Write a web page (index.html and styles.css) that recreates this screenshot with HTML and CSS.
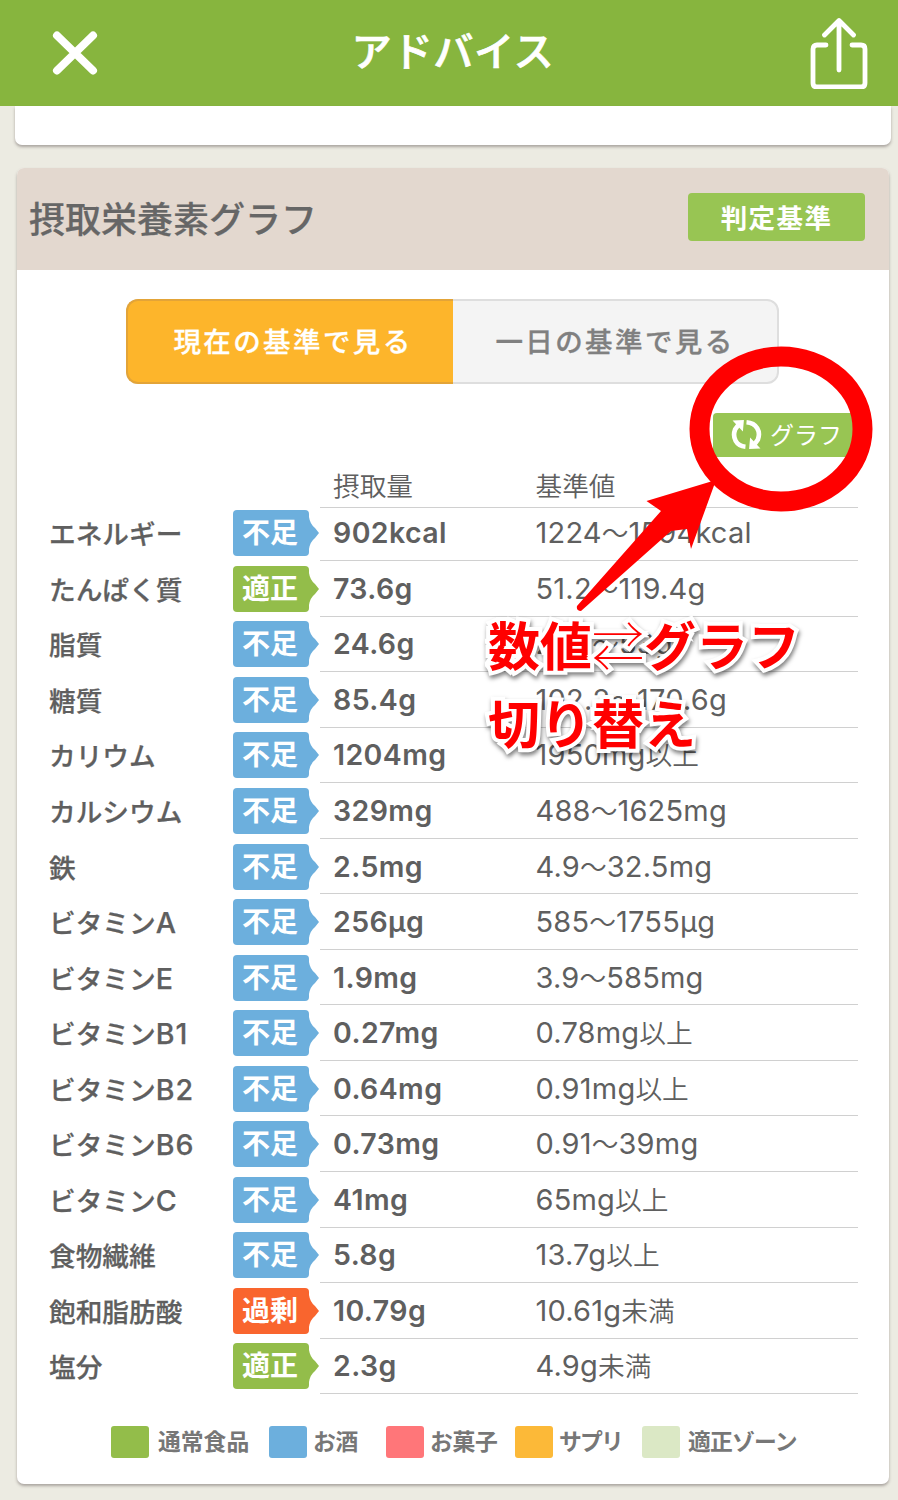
FILE: index.html
```html
<!DOCTYPE html>
<html lang="ja">
<head>
<meta charset="utf-8">
<title>アドバイス</title>
<link rel="stylesheet" href="styles.css">
</head>
<body>
<header class="topbar">
  <svg class="icon-close" viewBox="0 0 46 46"><path d="M5 5.500 41 40.500M41 5.500 5 40.500"/></svg>
  <h1 class="topbar-title">アドバイス</h1>
  <svg class="icon-share" viewBox="0 0 58 72"><path d="M16 28H7q-4 0-4 4v34q0 4 4 4h44q4 0 4-4V32q0-4-4-4h-9M29 53V4M14.500 18 29 3.500 43.500 18"/></svg>
</header>
<main class="content">
  <section class="card card-previous"></section>
  <section class="card card-graph">
    <div class="card-head">
      <h2 class="card-title">摂取栄養素グラフ</h2>
      <span class="criteria">判定基準</span>
    </div>
    <div class="tabs">
      <span class="tab tab-active">現在の基準で見る</span>
      <span class="tab">一日の基準で見る</span>
    </div>
    <div class="toggle-row">
      <span class="toggle">
        <svg class="icon-cycle" viewBox="0 0 30 30"><path class="arc" d="M14 26.800C5 26 1 18 4 10L7 6M15 3.200C25 4 29 12 26 20L23 24"/><path class="tip" d="M1.500 1.500 12.500 1 11.500 12ZM28.500 28.500 17.500 29 18.500 18Z"/></svg>
        <span class="toggle-label">グラフ</span>
      </span>
    </div>
    <div class="table">
      <div class="row row-head"><div class="values"><span>摂取量</span><span>基準値</span></div></div>
      <div class="row row-first"><span class="name">エネルギー</span><span class="badge low">不足<svg class="tail" viewBox="0 0 10 32"><path d="M0 0Q1 7 6 11L10 16 6 21Q1 25 0 32Z"/></svg></span><div class="values"><b>902kcal</b><span>1224<i>〜</i>1594kcal</span></div></div>
      <div class="row"><span class="name">たんぱく質</span><span class="badge good">適正<svg class="tail" viewBox="0 0 10 32"><path d="M0 0Q1 7 6 11L10 16 6 21Q1 25 0 32Z"/></svg></span><div class="values"><b>73.6g</b><span>51.2<i>〜</i>119.4g</span></div></div>
      <div class="row"><span class="name">脂質</span><span class="badge low">不足<svg class="tail" viewBox="0 0 10 32"><path d="M0 0Q1 7 6 11L10 16 6 21Q1 25 0 32Z"/></svg></span><div class="values"><b>24.6g</b><span>27.3<i>〜</i>53g</span></div></div>
      <div class="row"><span class="name">糖質</span><span class="badge low">不足<svg class="tail" viewBox="0 0 10 32"><path d="M0 0Q1 7 6 11L10 16 6 21Q1 25 0 32Z"/></svg></span><div class="values"><b>85.4g</b><span>102.2<i>〜</i>170.6g</span></div></div>
      <div class="row"><span class="name">カリウム</span><span class="badge low">不足<svg class="tail" viewBox="0 0 10 32"><path d="M0 0Q1 7 6 11L10 16 6 21Q1 25 0 32Z"/></svg></span><div class="values"><b>1204mg</b><span>1950mg<i>以上</i></span></div></div>
      <div class="row"><span class="name">カルシウム</span><span class="badge low">不足<svg class="tail" viewBox="0 0 10 32"><path d="M0 0Q1 7 6 11L10 16 6 21Q1 25 0 32Z"/></svg></span><div class="values"><b>329mg</b><span>488<i>〜</i>1625mg</span></div></div>
      <div class="row"><span class="name">鉄</span><span class="badge low">不足<svg class="tail" viewBox="0 0 10 32"><path d="M0 0Q1 7 6 11L10 16 6 21Q1 25 0 32Z"/></svg></span><div class="values"><b>2.5mg</b><span>4.9<i>〜</i>32.5mg</span></div></div>
      <div class="row"><span class="name">ビタミン<span class="latin">A</span></span><span class="badge low">不足<svg class="tail" viewBox="0 0 10 32"><path d="M0 0Q1 7 6 11L10 16 6 21Q1 25 0 32Z"/></svg></span><div class="values"><b>256μg</b><span>585<i>〜</i>1755μg</span></div></div>
      <div class="row"><span class="name">ビタミン<span class="latin">E</span></span><span class="badge low">不足<svg class="tail" viewBox="0 0 10 32"><path d="M0 0Q1 7 6 11L10 16 6 21Q1 25 0 32Z"/></svg></span><div class="values"><b>1.9mg</b><span>3.9<i>〜</i>585mg</span></div></div>
      <div class="row"><span class="name">ビタミン<span class="latin">B1</span></span><span class="badge low">不足<svg class="tail" viewBox="0 0 10 32"><path d="M0 0Q1 7 6 11L10 16 6 21Q1 25 0 32Z"/></svg></span><div class="values"><b>0.27mg</b><span>0.78mg<i>以上</i></span></div></div>
      <div class="row"><span class="name">ビタミン<span class="latin">B2</span></span><span class="badge low">不足<svg class="tail" viewBox="0 0 10 32"><path d="M0 0Q1 7 6 11L10 16 6 21Q1 25 0 32Z"/></svg></span><div class="values"><b>0.64mg</b><span>0.91mg<i>以上</i></span></div></div>
      <div class="row"><span class="name">ビタミン<span class="latin">B6</span></span><span class="badge low">不足<svg class="tail" viewBox="0 0 10 32"><path d="M0 0Q1 7 6 11L10 16 6 21Q1 25 0 32Z"/></svg></span><div class="values"><b>0.73mg</b><span>0.91<i>〜</i>39mg</span></div></div>
      <div class="row"><span class="name">ビタミン<span class="latin">C</span></span><span class="badge low">不足<svg class="tail" viewBox="0 0 10 32"><path d="M0 0Q1 7 6 11L10 16 6 21Q1 25 0 32Z"/></svg></span><div class="values"><b>41mg</b><span>65mg<i>以上</i></span></div></div>
      <div class="row"><span class="name">食物繊維</span><span class="badge low">不足<svg class="tail" viewBox="0 0 10 32"><path d="M0 0Q1 7 6 11L10 16 6 21Q1 25 0 32Z"/></svg></span><div class="values"><b>5.8g</b><span>13.7g<i>以上</i></span></div></div>
      <div class="row"><span class="name">飽和脂肪酸</span><span class="badge over">過剰<svg class="tail" viewBox="0 0 10 32"><path d="M0 0Q1 7 6 11L10 16 6 21Q1 25 0 32Z"/></svg></span><div class="values"><b>10.79g</b><span>10.61g<i>未満</i></span></div></div>
      <div class="row"><span class="name">塩分</span><span class="badge good">適正<svg class="tail" viewBox="0 0 10 32"><path d="M0 0Q1 7 6 11L10 16 6 21Q1 25 0 32Z"/></svg></span><div class="values"><b>2.3g</b><span>4.9g<i>未満</i></span></div></div>
    </div>
    <div class="legend">
      <span class="key key-food"><span class="swatch"></span>通常食品</span>
      <span class="key key-alcohol"><span class="swatch"></span>お酒</span>
      <span class="key key-sweets"><span class="swatch"></span>お菓子</span>
      <span class="key key-supplement"><span class="swatch"></span>サプリ</span>
      <span class="key key-zone"><span class="swatch"></span>適正ゾーン</span>
    </div>
  </section>
</main>
<svg class="marks" viewBox="0 0 898 1500">
  <ellipse cx="781" cy="429" rx="81.500" ry="72.500"/>
  <path d="M716 480 646.500 501 661 511 577 606Q576 611 581 611L671 531 687 529 691 549Z"/>
</svg>
<div class="note">数値<span class="swap">⇄</span>グラフ<br>切り替え</div>
</body>
</html>
```
FILE: styles.css
```css
* { box-sizing: border-box; }
body {
  margin: 0;
  width: 898px;
  height: 1500px;
  overflow: hidden;
  position: relative;
  background: #ecebe2;
  color: #5f5f5f;
  font-family: Inter, "Noto Sans CJK JP", sans-serif;
}
svg { display: block; flex: none; }
.topbar {
  height: 106px;
  padding: 0 30px 0 52px;
  display: flex;
  align-items: center;
  justify-content: space-between;
  background: #87b53e;
  color: #fff;
}
.topbar-title {
  margin: 0 0 2px -2px;
  font-size: 40.3px;
  letter-spacing: .5px;
  line-height: 60px;
  font-weight: 500;
  -webkit-text-stroke: 0.7px #fff;
}
.icon-close { width: 46px; height: 46px; fill: none; stroke: #fff; stroke-width: 8; stroke-linecap: round; }
.icon-share { width: 58px; height: 72px; fill: none; stroke: #fff; stroke-width: 4.8; stroke-linecap: round; stroke-linejoin: round; }
.card { background: #fff; box-shadow: 0 2px 3px rgba(90, 80, 80, .45); }
.card-previous { height: 39px; margin: 0 7px 0 15px; border-radius: 0 0 7px 7px; }
.card-graph { height: 1316px; margin: 23px 9px 0 17px; border-radius: 7px; overflow: hidden; }
.card-head {
  height: 102px;
  padding: 0 24px 0 12px;
  display: flex;
  align-items: center;
  justify-content: space-between;
  background: #e3d8cf;
}
.card-title { margin: 1px 0 0; font-size: 36px; line-height: 50px; font-weight: 500; color: #666; -webkit-text-stroke: .2px #666; }
.criteria {
  width: 177px;
  height: 48px;
  margin-bottom: 4px;
  border-radius: 4px;
  background: #98c553;
  color: #fff;
  font-size: 26.5px;
  font-weight: 700;
  letter-spacing: 1.4px;
  line-height: 50px;
  text-align: center;
}
.tabs {
  width: 653px;
  height: 85px;
  margin: 29px 0 0 109px;
  display: flex;
  border: 2px solid #dedede;
  border-radius: 12px;
  background: #f4f4f4;
}
.tab {
  flex: 1;
  font-size: 27.5px;
  font-weight: 500;
  letter-spacing: 2.4px;
  line-height: 83px;
  text-align: center;
  color: #808080;
  -webkit-text-stroke: .3px currentColor;
}
.tab-active {
  flex: 0 0 327px;
  margin: -2px 0 -2px -2px;
  padding-left: 5px;
  border: 2px solid #e3a438;
  border-right: 0;
  border-radius: 12px 0 0 12px;
  background: #fdb52b;
  color: #fff;
}
.toggle-row { display: flex; justify-content: flex-end; padding: 29px 31px 0 0; }
.toggle {
  width: 145px;
  height: 44px;
  padding-left: 18px;
  display: flex;
  align-items: center;
  gap: 8px;
  border-radius: 4px;
  background: #98c553;
  color: #fff;
  font-size: 24px;
}
.toggle-label { margin-top: -3px; }
.icon-cycle { width: 31px; height: 31px; margin-top: -1px; }
.arc { fill: none; stroke: #fff; stroke-width: 4.5; }
.tip { fill: #fff; }
.table { padding: 0 31px 0 32px; }
.row { height: 55.56px; display: flex; justify-content: flex-start; align-items: stretch; }
.row-head { height: 51px; justify-content: flex-end; }
.row-first { height: 53px; }
.name {
  width: 184px;
  padding-top: 2px;
  align-self: center;
  font-size: 26.7px;
  line-height: 40px;
  font-weight: 500;
  -webkit-text-stroke: .25px currentColor;
}
.latin { font-size: 28.6px; letter-spacing: 1px; line-height: 1; }
.badge {
  position: relative;
  width: 76px;
  height: 46px;
  padding-right: 2px;
  margin-right: 11px;
  align-self: center;
  border-radius: 4px;
  background: currentColor;
  font-size: 28px;
  font-weight: 700;
  line-height: 46px;
  text-align: center;
  -webkit-text-fill-color: #fff;
}
.tail { position: absolute; left: 76px; top: 7px; width: 10px; height: 32px; fill: currentColor; }
.low { color: #6cafdd; }
.good { color: #93bd4a; }
.over { color: #f9652e; }
.values {
  width: 538px;
  padding: 1px 0 0 13px;
  display: grid;
  grid-template-columns: 202.5px 1fr;
  align-items: center;
  border-bottom: 1px solid #d0d0d0;
  font-size: 29px;
  letter-spacing: .2px;
  line-height: 40px;
  white-space: nowrap;
}
.values b { font-size: 28.5px; font-weight: 600; letter-spacing: .4px; }
.values i { font-size: 26.7px; font-style: normal; font-weight: 350; letter-spacing: 0; line-height: 1; }
.row-head .values { padding-top: 8px; font-size: 26.7px; font-weight: 350; letter-spacing: 0; }
.row-first .badge { margin-bottom: 4px; }
.row-first .name { margin-bottom: 3px; }
.row-first .values { padding: 0 0 2px 13px; }
.legend { margin: 31px 0 0 94px; display: flex; align-items: center; }
.key { display: flex; align-items: center; font-size: 22.8px; line-height: 34px; font-weight: 700; color: #777; }
.swatch { width: 38px; height: 32px; border-radius: 3px; margin-right: 6px; }
.key-food { width: 158px; }
.key-alcohol { width: 117px; letter-spacing: -.3px; }
.key-sweets { width: 129px; letter-spacing: -.3px; }
.key-supplement { width: 127px; letter-spacing: -1.8px; }
.key-zone { letter-spacing: -.8px; }
.key-food .swatch { background: #93bd4a; margin-right: 9px; }
.key-alcohol .swatch { background: #6cafdd; }
.key-sweets .swatch { background: #ff7679; }
.key-supplement .swatch { background: #fcb938; }
.key-zone .swatch { background: #dbe8c5; margin-right: 8px; }
.marks { position: absolute; left: 0; top: 0; width: 898px; height: 1500px; }
.marks ellipse { fill: none; stroke: #f00; stroke-width: 20; }
.marks path { fill: #f00; }
.note {
  position: absolute;
  left: 488px;
  top: 605px;
  color: #f00;
  font: 700 52px/78px "Noto Sans CJK JP", sans-serif;
  white-space: nowrap;
  -webkit-text-stroke: 8px #fff;
  paint-order: stroke fill;
  filter: drop-shadow(1px 3px 2px rgba(0, 0, 0, .5));
}
.swap { font-weight: 100; }
```
